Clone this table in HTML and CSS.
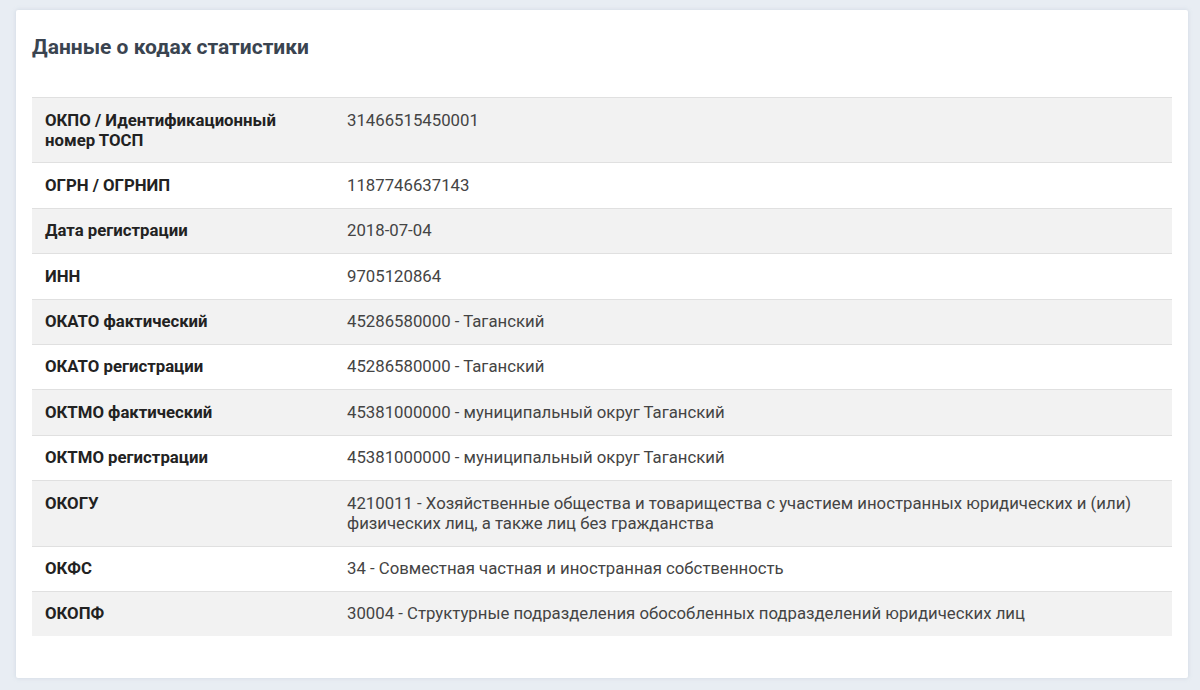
FILE: index.html
```html
<!DOCTYPE html>
<html lang="ru">
<head>
<meta charset="utf-8">
<title>Данные о кодах статистики</title>
<link rel="stylesheet" href="styles.css">
</head>
<body>
<section class="card">
  <h2 class="card-title">Данные о кодах статистики</h2>
  <table class="codes">
    <tbody>
      <tr><th>ОКПО / Идентификационный номер ТОСП</th><td>31466515450001</td></tr>
      <tr><th>ОГРН / ОГРНИП</th><td>1187746637143</td></tr>
      <tr><th>Дата регистрации</th><td>2018-07-04</td></tr>
      <tr><th>ИНН</th><td>9705120864</td></tr>
      <tr><th>ОКАТО фактический</th><td>45286580000 - Таганский</td></tr>
      <tr><th>ОКАТО регистрации</th><td>45286580000 - Таганский</td></tr>
      <tr><th>ОКТМО фактический</th><td>45381000000 - муниципальный округ Таганский</td></tr>
      <tr><th>ОКТМО регистрации</th><td>45381000000 - муниципальный округ Таганский</td></tr>
      <tr><th>ОКОГУ</th><td>4210011 - Хозяйственные общества и товарищества с участием иностранных юридических и (или) физических лиц, а также лиц без гражданства</td></tr>
      <tr><th>ОКФС</th><td>34 - Совместная частная и иностранная собственность</td></tr>
      <tr><th>ОКОПФ</th><td>30004 - Структурные подразделения обособленных подразделений юридических лиц</td></tr>
    </tbody>
  </table>
</section>
</body>
</html>
```

FILE: styles.css
```css
html, body {
  margin: 0;
  padding: 0;
}
body {
  background: #e8edf3;
  font-family: Roboto, "Noto Sans", "Liberation Sans", sans-serif;
  padding: 10px 12px 12px 16px;
  box-sizing: border-box;
  height: 690px;
}
.card {
  width: 1172px;
  box-sizing: border-box;
  background: #fff;
  padding: 25px 16px 42px 16px;
  box-shadow: 0 0 4px rgba(160, 175, 195, 0.35);
  border-radius: 2px;
}
.card-title {
  margin: 0 0 38px 0;
  font-size: 21px;
  line-height: 24px;
  font-weight: 700;
  color: #3a4450;
}
.codes {
  width: 100%;
  border-collapse: collapse;
  font-size: 16.75px;
  line-height: 20px;
}
.codes tr {
  border-top: 1px solid #e0e0e0;
}
.codes tr:nth-child(odd) {
  background: #f2f2f2;
}
.codes th,
.codes td {
  padding: 11.5px 13px 12.9px 13px;
  vertical-align: top;
  text-align: left;
}
.codes th {
  width: 276px;
  font-weight: 700;
  color: #222;
}
.codes td {
  font-weight: 400;
  color: #444;
}
```
